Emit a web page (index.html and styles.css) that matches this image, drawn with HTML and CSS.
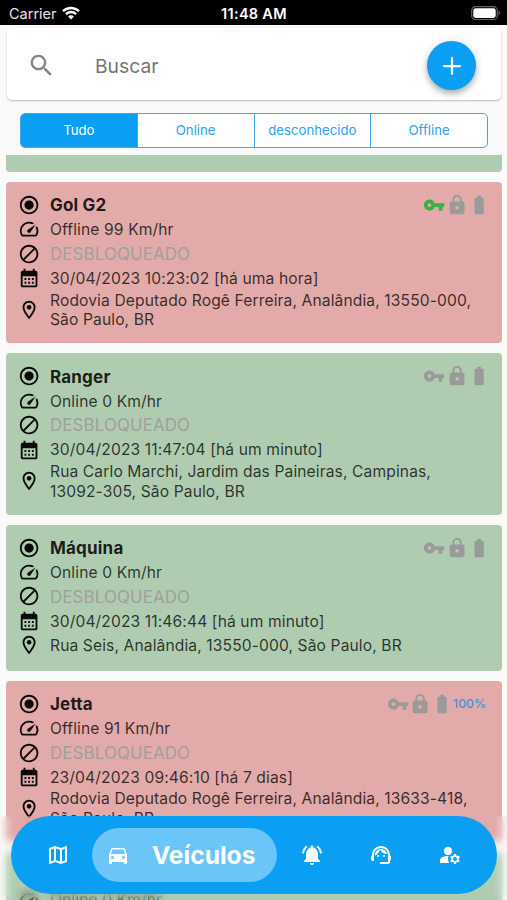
FILE: index.html
```
<!DOCTYPE html>
<html lang="pt-BR">
<head>
  <meta charset="UTF-8">
  <title>Veículos</title>
  <meta name="viewport" content="width=device-width, initial-scale=1.0">
  <link rel="stylesheet" href="styles.css">
</head>
<body>
  <!-- Icon set -->
  <svg class="icon-set" width="0" height="0">
    <symbol id="i-radio" viewBox="0 0 24 24"><path d="M12 7c-2.760 0-5 2.240-5 5s2.240 5 5 5 5-2.240 5-5-2.240-5-5-5zm0-5C6.480 2 2 6.480 2 12s4.480 10 10 10 10-4.480 10-10S17.520 2 12 2zm0 18c-4.420 0-8-3.580-8-8s3.580-8 8-8 8 3.580 8 8-3.580 8-8 8z"/></symbol>
    <symbol id="i-speed" viewBox="0 0 24 24"><path d="M20.380 8.570l-1.230 1.850a8 8 0 0 1-.220 7.580H5.070A8 8 0 0 1 15.580 6.850l1.850-1.230A10 10 0 0 0 3.350 19a2 2 0 0 0 1.720 1h13.850a2 2 0 0 0 1.740-1 10 10 0 0 0-.270-10.440zm-9.790 6.840a2 2 0 0 0 2.830 0l5.660-8.490-8.490 5.660a2 2 0 0 0 0 2.830z"/></symbol>
    <symbol id="i-block" viewBox="0 0 24 24"><path d="M12 2C6.500 2 2 6.500 2 12s4.500 10 10 10 10-4.500 10-10S17.500 2 12 2zM4 12c0-4.400 3.600-8 8-8 1.800 0 3.500.6 4.900 1.700L5.700 16.900C4.600 15.500 4 13.800 4 12zm8 8c-1.800 0-3.500-.6-4.900-1.700L18.300 7.100C19.400 8.500 20 10.200 20 12c0 4.400-3.600 8-8 8z"/></symbol>
    <symbol id="i-calendar" viewBox="0 0 24 24"><path d="M19 4h-1V2h-2v2H8V2H6v2H5c-1.110 0-1.990.9-1.990 2L3 20c0 1.100.89 2 2 2h14c1.100 0 2-.9 2-2V6c0-1.100-.9-2-2-2zm0 16H5V10h14v10zM9 14H7v-2h2v2zm4 0h-2v-2h2v2zm4 0h-2v-2h2v2zm-8 4H7v-2h2v2zm4 0h-2v-2h2v2zm4 0h-2v-2h2v2z"/></symbol>
    <symbol id="i-place" viewBox="0 0 24 24"><path d="M12 2C8.130 2 5 5.130 5 9c0 5.250 7 13 7 13s7-7.750 7-13c0-3.870-3.130-7-7-7zM7 9c0-2.760 2.240-5 5-5s5 2.240 5 5c0 2.880-2.880 7.190-5 9.880C9.920 16.210 7 11.850 7 9z"/><circle cx="12" cy="9" r="2.500"/></symbol>
    <symbol id="i-key" viewBox="0 0 24 24"><path d="M12.650 10C11.830 7.670 9.610 6 7 6c-3.310 0-6 2.690-6 6s2.690 6 6 6c2.610 0 4.830-1.670 5.650-4H17v4h4v-4h2v-4H12.650zM7 14c-1.100 0-2-.9-2-2s.9-2 2-2 2 .9 2 2-.9 2-2 2z"/></symbol>
    <symbol id="i-lock" viewBox="0 0 24 24"><path d="M18 8h-1V6c0-2.760-2.240-5-5-5S7 3.240 7 6v2H6c-1.100 0-2 .9-2 2v10c0 1.100.9 2 2 2h12c1.100 0 2-.9 2-2V10c0-1.100-.9-2-2-2zm-6 9c-1.100 0-2-.9-2-2s.9-2 2-2 2 .9 2 2-.9 2-2 2zm3.100-9H8.900V6c0-1.710 1.390-3.100 3.100-3.100 1.710 0 3.100 1.390 3.100 3.100v2z"/></symbol>
    <symbol id="i-battery" viewBox="0 0 24 24"><path d="M15.670 4H14V2h-4v2H8.330C7.600 4 7 4.600 7 5.330v15.330C7 21.400 7.600 22 8.330 22h7.330c.74 0 1.340-.6 1.340-1.330V5.330C17 4.600 16.400 4 15.670 4z"/></symbol>
    <symbol id="i-search" viewBox="0 0 24 24"><path d="M15.500 14h-.79l-.28-.27C15.410 12.590 16 11.110 16 9.500 16 5.910 13.090 3 9.500 3S3 5.910 3 9.500 5.910 16 9.500 16c1.610 0 3.090-.59 4.230-1.570l.27.28v.79l5 4.990L20.490 19l-4.990-5zm-6 0C7.010 14 5 11.990 5 9.500S7.010 5 9.500 5 14 7.010 14 9.500 11.990 14 9.500 14z"/></symbol>
    <symbol id="i-plus" viewBox="0 0 24 24"><path d="M19 12.900h-6.100V19h-1.800v-6.100H5v-1.800h6.100V5h1.800v6.100H19z"/></symbol>
    <symbol id="i-map" viewBox="0 0 24 24"><path d="M20.500 3l-.16.03L15 5.100 9 3 3.360 4.900c-.21.07-.36.25-.36.48V20.500c0 .28.22.5.5.5l.16-.03L9 18.900l6 2.100 5.640-1.900c.21-.07.36-.25.36-.48V3.500c0-.28-.22-.5-.5-.5zM10 5.470l4 1.400v11.660l-4-1.400V5.470zm-5 .99l3-1.010v11.700l-3 1.160V6.460zm14 11.080l-3 1.010V6.860l3-1.160v11.840z"/></symbol>
    <symbol id="i-car" viewBox="0 0 24 24"><path d="M18.920 6.010C18.720 5.420 18.160 5 17.500 5h-11c-.66 0-1.210.42-1.420 1.010L3 12v8c0 .55.45 1 1 1h1c.55 0 1-.45 1-1v-1h12v1c0 .55.45 1 1 1h1c.55 0 1-.45 1-1v-8l-2.080-5.990zM6.500 16c-.83 0-1.500-.67-1.500-1.500S5.670 13 6.500 13s1.500.67 1.500 1.500S7.330 16 6.500 16zm11 0c-.83 0-1.500-.67-1.500-1.500s.67-1.500 1.500-1.500 1.500.67 1.500 1.500-.67 1.500-1.500 1.500zM5 11l1.500-4.500h11L19 11H5z"/></symbol>
    <symbol id="i-bell" viewBox="0 0 24 24"><path d="M7.580 4.080L6.150 2.650C3.750 4.480 2.170 7.300 2.030 10.500h2c.15-2.650 1.510-4.970 3.550-6.420zm12.390 6.420h2c-.15-3.200-1.730-6.020-4.120-7.850l-1.420 1.430c2.020 1.450 3.390 3.770 3.540 6.420zM18 11c0-3.070-1.640-5.640-4.500-6.320V4c0-.83-.67-1.500-1.500-1.500s-1.500.67-1.500 1.500v.68C7.630 5.360 6 7.920 6 11v5l-2 2v1h16v-1l-2-2v-5zm-6 11c.14 0 .27-.01.4-.04.65-.14 1.180-.58 1.440-1.180.1-.24.15-.5.15-.78h-4c.01 1.100.9 2 2.010 2z"/></symbol>
    <symbol id="i-agent" viewBox="0 0 24 24"><path d="M21 12.220C21 6.730 16.740 3 12 3c-4.690 0-9 3.650-9 9.280-.6.340-1 .980-1 1.720v2c0 1.100.9 2 2 2h1v-6.100c0-3.870 3.130-7 7-7s7 3.130 7 7V19h-8v2h8c1.100 0 2-.9 2-2v-1.220c.59-.31 1-.92 1-1.640v-2.300c0-.7-.41-1.310-1-1.620z"/><circle cx="9" cy="13" r="1"/><circle cx="15" cy="13" r="1"/><path d="M18 11.030C17.520 8.180 15.040 6 12.050 6c-3.030 0-6.290 2.510-6.030 6.450 2.470-1.010 4.330-3.210 4.860-5.890 1.310 2.630 4 4.440 7.120 4.470z"/></symbol>
    <symbol id="i-account" viewBox="0 0 24 24"><circle cx="10" cy="8" r="4"/><path d="M10.670 13.020C10.450 13.010 10.230 13 10 13c-2.420 0-4.680.67-6.610 1.820C2.510 15.340 2 16.320 2 17.350V20h9.260C10.470 18.870 10 17.490 10 16c0-1.070.25-2.070.67-2.980zM20.750 16c0-.22-.03-.42-.06-.63l1.140-1.010-1-1.730-1.450.49c-.32-.27-.68-.48-1.080-.63L18 11h-2l-.3 1.490c-.4.150-.76.360-1.080.63l-1.450-.49-1 1.730 1.140 1.010c-.03.210-.06.410-.06.630s.03.420.06.630l-1.140 1.010 1 1.730 1.450-.49c.32.270.68.480 1.080.63L16 21h2l.3-1.490c.4-.15.76-.36 1.080-.63l1.450.49 1-1.730-1.140-1.010c.03-.21.06-.41.06-.63zM17 18c-1.100 0-2-.9-2-2s.9-2 2-2 2 .9 2 2-.9 2-2 2z"/></symbol>
  </svg>

  <div class="statusbar">
    <div class="carrier">
      Carrier
      <svg class="wifi" viewBox="0 0 18 14">
        <path d="M1 5.200a11.500 11.500 0 0 1 16 0M3.900 8.100a7.400 7.400 0 0 1 10.200 0"/>
        <path class="wifi-dot" d="M9 13.600L6 10.600a4.300 4.300 0 0 1 6 0z"/>
      </svg>
    </div>
    <div class="clock">11:48 AM</div>
    <div class="power">
      <svg class="power-icon" viewBox="0 0 30 15">
        <rect class="power-case" x="0.700" y="0.700" width="25.600" height="12.800" rx="3.800"/>
        <rect x="2.300" y="2.300" width="22.400" height="9.600" rx="2.300"/>
        <path class="power-tip" d="M27.600 4.800v4.600c1.800-.7 1.800-3.900 0-4.600z"/>
      </svg>
    </div>
  </div>

  <div class="search">
    <svg class="search-icon"><use href="#i-search"/></svg>
    <span class="search-text">Buscar</span>
    <button class="add"><svg><use href="#i-plus"/></svg></button>
  </div>

  <div class="tabs">
    <div class="tab active">Tudo</div>
    <div class="tab">Online</div>
    <div class="tab">desconhecido</div>
    <div class="tab">Offline</div>
  </div>

  <!-- Vehicle list -->
  <div class="list">
    <div class="card online cut"></div>

    <div class="card offline">
      <div class="row name"><svg><use href="#i-radio"/></svg><span>Gol G2</span>
        <div class="flags"><svg class="on"><use href="#i-key"/></svg><svg><use href="#i-lock"/></svg><svg><use href="#i-battery"/></svg></div>
      </div>
      <div class="row"><svg><use href="#i-speed"/></svg><span>Offline 99 Km/hr</span></div>
      <div class="row muted"><svg><use href="#i-block"/></svg><span>DESBLOQUEADO</span></div>
      <div class="row"><svg><use href="#i-calendar"/></svg><span>30/04/2023 10:23:02 [há uma hora]</span></div>
      <div class="row address"><svg><use href="#i-place"/></svg><span>Rodovia Deputado Rogê Ferreira, Analândia, 13550-000,<br>São Paulo, BR</span></div>
    </div>

    <div class="card online">
      <div class="row name"><svg><use href="#i-radio"/></svg><span>Ranger</span>
        <div class="flags"><svg><use href="#i-key"/></svg><svg><use href="#i-lock"/></svg><svg><use href="#i-battery"/></svg></div>
      </div>
      <div class="row"><svg><use href="#i-speed"/></svg><span>Online 0 Km/hr</span></div>
      <div class="row muted"><svg><use href="#i-block"/></svg><span>DESBLOQUEADO</span></div>
      <div class="row"><svg><use href="#i-calendar"/></svg><span>30/04/2023 11:47:04 [há um minuto]</span></div>
      <div class="row address"><svg><use href="#i-place"/></svg><span>Rua Carlo Marchi, Jardim das Paineiras, Campinas,<br>13092-305, São Paulo, BR</span></div>
    </div>

    <div class="card online">
      <div class="row name"><svg><use href="#i-radio"/></svg><span>Máquina</span>
        <div class="flags"><svg><use href="#i-key"/></svg><svg><use href="#i-lock"/></svg><svg><use href="#i-battery"/></svg></div>
      </div>
      <div class="row"><svg><use href="#i-speed"/></svg><span>Online 0 Km/hr</span></div>
      <div class="row muted"><svg><use href="#i-block"/></svg><span>DESBLOQUEADO</span></div>
      <div class="row"><svg><use href="#i-calendar"/></svg><span>30/04/2023 11:46:44 [há um minuto]</span></div>
      <div class="row"><svg><use href="#i-place"/></svg><span>Rua Seis, Analândia, 13550-000, São Paulo, BR</span></div>
    </div>

    <div class="card offline">
      <div class="row name"><svg><use href="#i-radio"/></svg><span>Jetta</span>
        <div class="flags"><svg><use href="#i-key"/></svg><svg><use href="#i-lock"/></svg><svg><use href="#i-battery"/></svg><span class="charge">100%</span></div>
      </div>
      <div class="row"><svg><use href="#i-speed"/></svg><span>Offline 91 Km/hr</span></div>
      <div class="row muted"><svg><use href="#i-block"/></svg><span>DESBLOQUEADO</span></div>
      <div class="row"><svg><use href="#i-calendar"/></svg><span>23/04/2023 09:46:10 [há 7 dias]</span></div>
      <div class="row address"><svg><use href="#i-place"/></svg><span>Rodovia Deputado Rogê Ferreira, Analândia, 13633-418,<br>São Paulo, BR</span></div>
    </div>

    <div class="card online">
      <div class="row name"></div>
      <div class="row"><svg><use href="#i-speed"/></svg><span>Online 0 Km/hr</span></div>
    </div>
  </div>

  <!-- Floating bottom navigation -->
  <div class="dock">
    <div class="nav">
      <svg><use href="#i-map"/></svg>
      <div class="nav-active"><svg><use href="#i-car"/></svg><span>Veículos</span></div>
      <svg class="bell"><use href="#i-bell"/></svg>
      <svg class="agent"><use href="#i-agent"/></svg>
      <svg class="account"><use href="#i-account"/></svg>
    </div>
  </div>
</body>
</html>
```
FILE: styles.css
```
* {
  box-sizing: border-box;
}
body {
  margin: 0;
  height: 900px;
  position: relative;
  overflow: hidden;
  display: flex;
  flex-direction: column;
  background: #fafafa;
  font-family: Inter, "Liberation Sans", sans-serif;
}
svg {
  display: block;
  flex: none;
  fill: currentColor;
}
.icon-set {
  position: absolute;
}

/* Status bar */
.statusbar {
  height: 25px;
  flex: none;
  display: grid;
  grid-template-columns: 1fr auto 1fr;
  align-items: center;
  padding: 2px 8px 0 9px;
  background: #000;
  color: #fff;
  font-size: 14.5px;
}
.carrier {
  display: flex;
  align-items: center;
  gap: 5px;
  color: #e4e4e4;
}
.wifi {
  width: 18px;
  height: 14px;
  margin-top: -2px;
}
.wifi path {
  fill: none;
  stroke: #fff;
  stroke-width: 2.4;
}
.wifi .wifi-dot {
  fill: #fff;
  stroke: none;
}
.clock {
  font-weight: 600;
  letter-spacing: 0.3px;
}
.power {
  display: flex;
  justify-content: flex-end;
}
.power-icon {
  width: 30px;
  height: 15px;
  margin-right: -2px;
}
.power-case {
  fill: none;
  stroke: #666;
  stroke-width: 1.2;
}
.power-tip {
  fill: #666;
}

/* Search */
.search {
  height: 72px;
  flex: none;
  margin: 3px 6px 0 7px;
  padding: 3px 25px 0 20px;
  display: flex;
  align-items: center;
  background: #fff;
  border-radius: 5px;
  box-shadow: 0 1px 2px rgba(0, 0, 0, 0.26);
  color: #757575;
}
.search-icon {
  width: 29px;
  height: 29px;
  color: #858585;
}
.search-text {
  margin-left: 39px;
  font-size: 19.3px;
}
.add {
  width: 49px;
  height: 49px;
  margin-left: auto;
  padding: 0;
  display: flex;
  align-items: center;
  justify-content: center;
  border: none;
  border-radius: 50%;
  background: #0a9ff3;
  color: #fff;
  box-shadow: 0 4px 6px rgba(0, 0, 0, 0.25), 0 1px 8px rgba(0, 0, 0, 0.12);
}
.add svg {
  width: 30px;
  height: 30px;
}

/* Filter tabs */
.tabs {
  height: 35px;
  flex: none;
  margin: 13px 19px 0 20px;
  display: flex;
  border: 1.3px solid #3da9ec;
  border-radius: 5px;
  background: #fff;
  overflow: hidden;
}
.tab {
  flex: 1 1 0;
  padding-bottom: 1px;
  display: flex;
  align-items: center;
  justify-content: center;
  color: #2ba3ec;
  font-size: 13.2px;
}
.tab + .tab {
  border-left: 1.3px solid #3da9ec;
}
.tab.active {
  background: #0a9ff3;
  color: #fff;
}

/* Vehicle cards */
.list {
  flex: 1;
  min-height: 0;
  margin: 6.5px 5px 0 6px;
  display: flex;
  flex-direction: column;
  gap: 10px;
  overflow: hidden;
}
.card {
  flex: none;
  padding: 11px 16px 13.3px 12px;
  border-radius: 4px;
}
.online {
  background: #afccb0;
}
.offline {
  background: #e2aaa9;
}
.cut {
  height: 17.5px;
  padding: 0;
  border-radius: 0 0 4px 4px;
}
.row {
  min-height: 24.4px;
  display: flex;
  align-items: center;
  gap: 9.8px;
  color: rgba(0, 0, 0, 0.76);
  font-size: 15.6px;
  line-height: 19.7px;
  letter-spacing: 0.12px;
  white-space: nowrap;
}
.row > span {
  padding-top: 1px;
}
.address > span {
  padding-top: 0;
}
.row > svg {
  width: 22.2px;
  height: 22.2px;
  color: #0b0b0b;
}
.name {
  color: rgba(0, 0, 0, 0.87);
  font-size: 17px;
  font-weight: 700;
  letter-spacing: 0.2px;
}
.name > span {
  padding-top: 2px;
}
.muted > span {
  padding-top: 2px;
  color: #a0a09c;
  font-size: 16.9px;
}
.flags {
  margin-left: auto;
  margin-right: -4px;
  display: flex;
  align-items: center;
  color: #989b9a;
}
.flags svg {
  width: 22.2px;
  height: 22.2px;
}
.flags .on {
  color: #3fae49;
}
.charge {
  margin-right: 4px;
  color: #4692dc;
  font-size: 12.2px;
  font-weight: 500;
  letter-spacing: 0;
}

/* Bottom navigation, content behind it is blurred */
.dock {
  position: absolute;
  left: 0;
  right: 0;
  bottom: 0;
  height: 84px;
  padding: 0 10px 6px 11px;
  backdrop-filter: blur(4px);
}
.nav {
  height: 78px;
  padding: 0 34px 0 35px;
  display: flex;
  align-items: center;
  border-radius: 39px;
  background: #0a9ff3;
  color: #fff;
}
.nav svg {
  width: 24px;
  height: 24px;
}
.nav-active {
  flex: none;
  width: 185px;
  height: 54px;
  margin-left: 22px;
  padding-left: 14px;
  display: flex;
  align-items: center;
  gap: 22px;
  border-radius: 27px;
  background: #6bc5f8;
  font-size: 24.6px;
  font-weight: 700;
}
.nav .bell {
  margin-left: 23px;
}
.nav .agent,
.nav .account {
  margin-left: 45px;
}
```
